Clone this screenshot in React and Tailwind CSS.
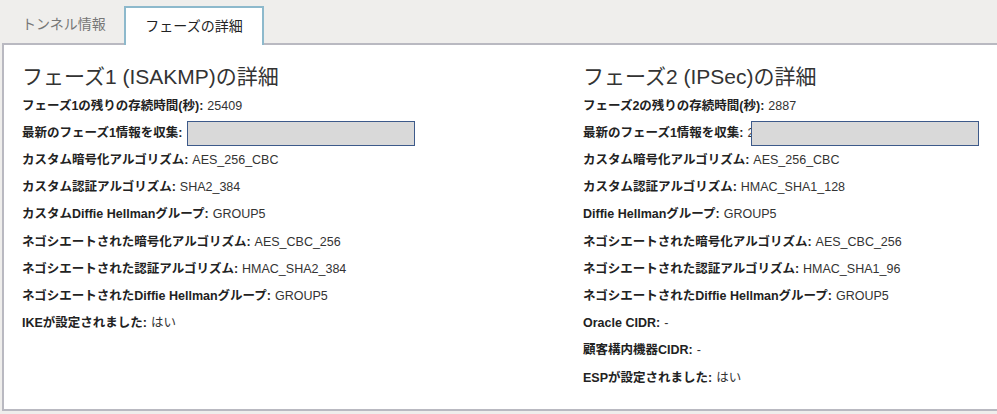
import React from "react";

const font = { fontFamily: '"Liberation Sans", "Noto Sans CJK JP", sans-serif' };

function Row({ label, value, input, overlapValue }) {
  return (
    <div className="flex h-[27.2px] items-center whitespace-nowrap text-[12.5px]">
      <span className="font-bold text-[#222]">{label}:</span>
      <span className="ml-[4px] text-[#333]">{value}</span>
      {input && (
        <span
          className={
            "h-[25px] w-[228px] border border-[#3d5a8a] bg-[#d9d9d9] " +
            (overlapValue ? "ml-[-3px]" : "ml-[0px]")
          }
        />
      )}
    </div>
  );
}

function Column({ title, rows, className }) {
  return (
    <div className={className}>
      <h2 className="mt-[18px] h-[28px] text-[21px] font-normal leading-[28px] text-[#333] whitespace-nowrap">
        {title}
      </h2>
      <div className="mt-[1.5px] flex flex-col">
        {rows.map((r, i) => (
          <Row key={i} {...r} />
        ))}
      </div>
    </div>
  );
}

export default function App() {
  const left = [
    { label: "フェーズ1の残りの存続時間(秒)", value: "25409" },
    { label: "最新のフェーズ1情報を収集", value: "", input: true },
    { label: "カスタム暗号化アルゴリズム", value: "AES_256_CBC" },
    { label: "カスタム認証アルゴリズム", value: "SHA2_384" },
    { label: "カスタムDiffie Hellmanグループ", value: "GROUP5" },
    { label: "ネゴシエートされた暗号化アルゴリズム", value: "AES_CBC_256" },
    { label: "ネゴシエートされた認証アルゴリズム", value: "HMAC_SHA2_384" },
    { label: "ネゴシエートされたDiffie Hellmanグループ", value: "GROUP5" },
    { label: "IKEが設定されました", value: "はい" },
  ];
  const right = [
    { label: "フェーズ2の残りの存続時間(秒)", value: "2887" },
    { label: "最新のフェーズ1情報を収集", value: "2", input: true, overlapValue: true },
    { label: "カスタム暗号化アルゴリズム", value: "AES_256_CBC" },
    { label: "カスタム認証アルゴリズム", value: "HMAC_SHA1_128" },
    { label: "Diffie Hellmanグループ", value: "GROUP5" },
    { label: "ネゴシエートされた暗号化アルゴリズム", value: "AES_CBC_256" },
    { label: "ネゴシエートされた認証アルゴリズム", value: "HMAC_SHA1_96" },
    { label: "ネゴシエートされたDiffie Hellmanグループ", value: "GROUP5" },
    { label: "Oracle CIDR", value: "-" },
    { label: "顧客構内機器CIDR", value: "-" },
    { label: "ESPが設定されました", value: "はい" },
  ];

  return (
    <div
      className="h-[414px] w-[997px] overflow-hidden bg-[#efeeec]"
      style={font}
    >
      {/* tab bar */}
      <div className="relative z-10 flex h-[43px] items-end">
        <div className="flex h-[37px] w-[124px] items-center pl-[22px] text-[14px] text-[#777]">
          トンネル情報
        </div>
        <div className="mb-[-2px] flex h-[39px] w-[140px] items-center justify-center border-x-2 border-t-2 border-[#8db9cc] bg-white text-[14px] text-[#222]">
          フェーズの詳細
        </div>
      </div>
      {/* panel */}
      <div className="ml-[2px] flex h-[368px] border-y-2 border-l-2 border-[#b9b9c1] bg-white pl-[18px]">
        <Column title="フェーズ1 (ISAKMP)の詳細" rows={left} className="w-[561px]" />
        <Column title="フェーズ2 (IPSec)の詳細" rows={right} className="flex-1" />
      </div>
    </div>
  );
}
